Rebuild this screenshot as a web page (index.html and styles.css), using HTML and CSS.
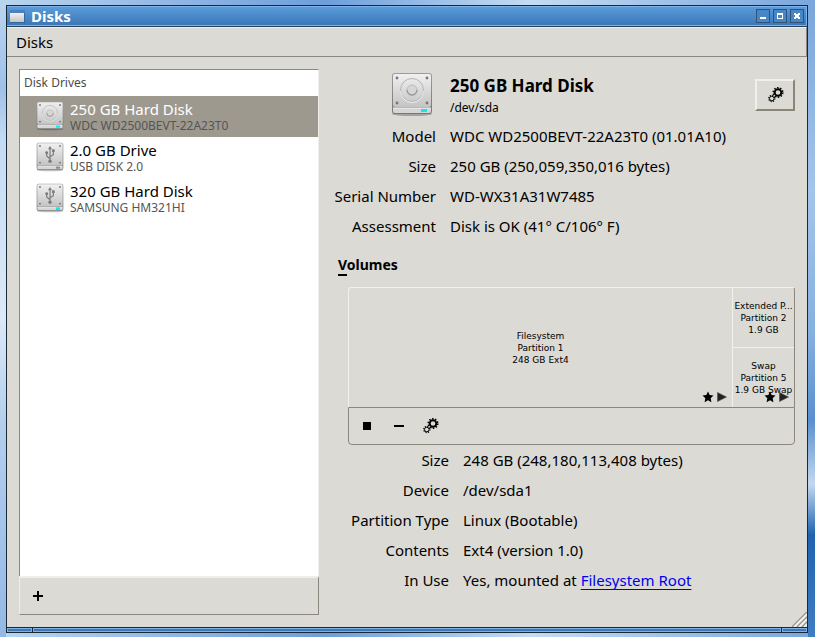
FILE: index.html
```html
<!DOCTYPE html>
<html lang="en">
<head>
<meta charset="utf-8">
<title>Disks</title>
<link rel="stylesheet" href="styles.css">
</head>
<body>
<svg class="defs" aria-hidden="true">
  <defs>
    <linearGradient id="lid" x1="0" y1="0" x2="0" y2="1">
      <stop offset="0" stop-color="#f0f0f0"/><stop offset="1" stop-color="#c4c4c4"/>
    </linearGradient>
    <linearGradient id="edge" x1="0" y1="0" x2="0" y2="1">
      <stop offset="0" stop-color="#9c9c9c"/><stop offset="1" stop-color="#777777"/>
    </linearGradient>
  </defs>
  <symbol id="case" viewBox="0 0 42 45">
    <ellipse cx="21" cy="42" rx="20" ry="2" fill="#000000" opacity=".25"/>
    <rect x="1" y="1" width="40" height="41" rx="3" fill="url(#edge)"/>
    <rect x="2" y="2" width="38" height="33" rx="2" fill="url(#lid)"/>
    <path d="M2 36h38v3q0 2-2 2H4q-2 0-2-2z" fill="#d6d6d6"/>
    <path d="M2 36h38" stroke="#f4f4f4"/>
    <g fill="#777777"><circle cx="6" cy="6" r="1.4"/><circle cx="36" cy="6" r="1.4"/><circle cx="6" cy="31" r="1.4"/><circle cx="36" cy="31" r="1.4"/></g>
  </symbol>
  <symbol id="disk" viewBox="0 0 42 45">
    <use href="#case"/>
    <circle cx="21" cy="18" r="11.5" fill="none" stroke="#b4b4b4"/>
    <path d="M9.5 19a11.5 11.5 0 0 0 23 0" fill="none" stroke="#ececec"/>
    <circle cx="21" cy="18" r="5" fill="#d6d6d6" stroke="#bcbcbc"/>
    <path d="M16 18a5 5 0 0 0 10 0" fill="none" stroke="#989898" stroke-width="1.3"/>
    <rect x="30" y="37" width="6" height="3" fill="#10e8f0"/>
  </symbol>
  <symbol id="usb" viewBox="0 0 42 45">
    <use href="#case"/>
    <g fill="none" stroke="#7c7c7c" stroke-width="1.8"><path d="M21 9v19M21 25l-5-4v-5M21 22l5-3v-5"/></g>
    <g fill="#7c7c7c"><path d="M18 11l3-5 3 5z"/><circle cx="21" cy="29" r="2.6"/><circle cx="16" cy="16" r="2.2"/><path d="M24 11h4v4h-4z"/></g>
    <path d="M30 37h6v3h-6z" fill="#8a8a8a"/>
  </symbol>
  <symbol id="gears" viewBox="0 0 16 16">
    <circle cx="10" cy="5.500" r="3.300" fill="none" stroke="#000000" stroke-width="1.900"/>
    <circle cx="10" cy="5.500" r="4.800" fill="none" stroke="#000000" stroke-width="1.500" stroke-dasharray="1.500 1.516"/>
    <circle cx="3.800" cy="11.500" r="2.300" fill="none" stroke="#000000" stroke-width="1"/>
    <circle cx="3.800" cy="11.500" r="3.100" fill="none" stroke="#000000" stroke-width="1.100" stroke-dasharray="1.200 1.235"/>
  </symbol>
  <symbol id="flags" viewBox="0 0 26 12">
    <path d="M6 .5l1.700 3.600 3.800.5-2.800 2.700.7 3.900L6 9.300l-3.400 1.900.7-3.900L.5 4.600l3.800-.5z" fill="#000000"/>
    <path d="M15.500 1.500l9 4.500-9 4.500z" fill="#222222" stroke="#555555" stroke-width=".7"/>
  </symbol>
</svg>

<div class="window">
  <header class="titlebar">
    <svg class="app-icon" viewBox="0 0 15 13" aria-hidden="true"><path fill="#36669c" d="M0 0h15v13H0z"/><path fill="#4b7fbd" d="M0 0h15v3H0z"/><path fill="url(#lid)" d="M0 3h14v9H0z"/></svg>
    <h1>Disks</h1>
    <button class="win-btn" aria-label="Minimize"><svg viewBox="0 0 12 12"><path d="M3 7h6v2H3z" fill="#ffffff"/></svg></button>
    <button class="win-btn" aria-label="Maximize"><svg viewBox="0 0 12 12"><path d="M3 3h6v6H3zM4 5v3h4V5z" fill="#ffffff" fill-rule="evenodd"/></svg></button>
    <button class="win-btn" aria-label="Close"><svg viewBox="0 0 12 12"><path d="M3 3h2v1h2V3h2v2H8v2h1v2H7V8H5v1H3V7h1V5H3z" fill="#ffffff"/></svg></button>
  </header>
  <nav class="menubar"><button class="menu">Disks</button></nav>

  <main class="content">
    <aside class="sidebar">
      <div class="drives">
        <h2>Disk Drives</h2>
        <ul>
          <li><button class="drive selected"><svg viewBox="0 0 42 45"><use href="#disk"/></svg><span><b>250 GB Hard Disk</b><small>WDC WD2500BEVT-22A23T0</small></span></button></li>
          <li><button class="drive"><svg viewBox="0 0 42 45"><use href="#usb"/></svg><span><b>2.0 GB Drive</b><small>USB DISK 2.0</small></span></button></li>
          <li><button class="drive"><svg viewBox="0 0 42 45"><use href="#usb"/><path d="M30 37h6v3h-6z" fill="#10e8f0"/></svg><span><b>320 GB Hard Disk</b><small>SAMSUNG HM321HI</small></span></button></li>
        </ul>
      </div>
      <div class="drive-tools">
        <button class="tool" aria-label="Add"><svg viewBox="0 0 16 16"><path d="M7 3h2v4h4v2H9v4H7V9H3V7h4z"/></svg></button>
      </div>
    </aside>

    <section class="details">
      <div class="disk-head">
        <svg class="disk-icon" viewBox="0 0 42 45"><use href="#disk"/></svg>
        <div class="disk-name"><h2>250 GB Hard Disk</h2><p>/dev/sda</p></div>
        <button class="actions" aria-label="Drive options"><svg viewBox="0 0 16 16"><use href="#gears"/></svg></button>
      </div>
      <dl class="props">
        <dt>Model</dt><dd>WDC WD2500BEVT-22A23T0 (01.01A10)</dd>
        <dt>Size</dt><dd>250 GB (250,059,350,016 bytes)</dd>
        <dt>Serial Number</dt><dd>WD-WX31A31W7485</dd>
        <dt>Assessment</dt><dd>Disk is OK (41° C/106° F)</dd>
      </dl>
      <h3><span class="mnemonic">V</span>olumes</h3>
      <div class="volumes">
        <div class="map">
          <div class="part main"><span>Filesystem<br>Partition 1<br>248 GB Ext4</span><svg class="flags" viewBox="0 0 26 12"><use href="#flags"/></svg></div>
          <div class="extended">
            <div class="part"><span>Extended P...<br>Partition 2<br>1.9 GB</span></div>
            <div class="part"><span>Swap<br>Partition 5<br>1.9 GB Swap</span><svg class="flags" viewBox="0 0 26 12"><use href="#flags"/></svg></div>
          </div>
        </div>
        <div class="volume-tools">
          <button class="tool" aria-label="Unmount"><svg viewBox="0 0 16 16"><path d="M4 4h8v8H4z"/></svg></button>
          <button class="tool" aria-label="Delete partition"><svg viewBox="0 0 16 16"><path d="M3 7h10v2H3z"/></svg></button>
          <button class="tool" aria-label="Volume options"><svg viewBox="0 0 16 16"><use href="#gears"/></svg></button>
        </div>
      </div>
      <dl class="props volume-props">
        <dt>Size</dt><dd>248 GB (248,180,113,408 bytes)</dd>
        <dt>Device</dt><dd>/dev/sda1</dd>
        <dt>Partition Type</dt><dd>Linux (Bootable)</dd>
        <dt>Contents</dt><dd>Ext4 (version 1.0)</dd>
        <dt>In Use</dt><dd>Yes, mounted at <a href="#root">Filesystem Root</a></dd>
      </dl>
    </section>
    <svg class="grip" viewBox="0 0 15 15" aria-hidden="true"><g fill="none" stroke-width="1.500"><path d="M0 15L15 0M5 15L15 5M10 15l5-5" stroke="#99958a"/><path d="M2 15L15 2M7 15l8-8M12 15l3-3" stroke="#f5f4f1"/></g></svg>
  </main>
  <footer class="frame"><i></i><i></i><i></i></footer>
</div>
</body>
</html>
```
FILE: styles.css
```css
* { box-sizing: border-box; margin: 0; padding: 0; }

body {
  display: flex;
  min-height: 100vh;
  padding: 5px 7px 4px 6px;
  font: 15px/20px "Noto Sans", sans-serif;
  color: #000000;
  background:
    linear-gradient(#7aa6dd, #a3c5ea 30%, #86b0e0 52%, #5a90cf 66%, #c2d8ef 76%, #1f63b0 84%, #3f7dc2) right / 7px 100% no-repeat,
    linear-gradient(#b9d5ee, #a0c0ea 14%, #c4dcf3 22%, #dbe9f8 50%, #b4cfee 66%, #94b8e6) left / 6px 100% no-repeat,
    linear-gradient(90deg, #b9d5ee, #94b8e6 20%, #6d9edb 40%, #c4dcf3 65%, #7aa6dd);
}

button { font: inherit; color: inherit; background: none; border: 0; }
svg { display: block; flex: none; }
.defs { position: absolute; width: 0; height: 0; }

.window {
  flex: 1;
  display: flex;
  flex-direction: column;
  border: 1px solid #1b2733;
  background: #dbdad5;
}

.titlebar {
  display: flex;
  align-items: center;
  gap: 3px;
  height: 20px;
  padding: 0 2px 0 3px;
  border: solid #7fb2e6;
  border-width: 1px 1px 1px 0;
  background: linear-gradient(#5a9bdb, #3c78b6);
  box-shadow: 0 1px #25405c;
}
.app-icon { width: 15px; height: 13px; margin-right: 3px; }
.titlebar h1 { flex: 1; font-size: 15px; line-height: 20px; color: #ffffff; }
.win-btn { width: 14px; height: 14px; border: 1px solid #2f5378; background: #4787c8; }
.win-btn svg { width: 12px; height: 12px; }

.menubar {
  margin-top: 1px;
  padding: 4px 9px;
  height: 30px;
  border: solid #8b877c;
  border-width: 1px 1px 1px 0;
  border-top-color: #f0efec;
}

.content { position: relative; flex: 1; display: flex; gap: 19px; padding: 12px; }

.sidebar { width: 300px; display: flex; flex-direction: column; }
.drives { flex: 1; background: #ffffff; border: 1px solid #8b877c; border-right-color: #efeeeb; border-bottom: 0; }
.drives h2 { padding: 3px 4px; font-size: 12px; font-weight: 400; color: #4c4c4c; }
.drives ul { list-style: none; }
.drive { display: flex; gap: 6px; align-items: flex-start; width: 100%; height: 41px; padding: 5px 16px 0; text-align: left; }
.drive svg { width: 28px; height: 30px; }
.drive b { display: block; font-weight: 400; line-height: 17px; }
.drive small { display: block; font-size: 12px; line-height: 16px; color: #555555; }
.selected { background: #9e998f; }
.selected b { color: #ffffff; }
.drive-tools {
  height: 39px;
  padding: 10px;
  border: 1px solid #8b877c;
  border-top: 2px solid #efeeeb;
  border-left-color: #efeeeb;
}
.tool svg { width: 16px; height: 16px; }

.details { flex: 1; min-width: 0; }
.disk-head { display: flex; gap: 17px; align-items: flex-start; height: 52px; padding: 3px 0 0 53px; }
.disk-icon { width: 42px; height: 45px; }
.disk-name { flex: 1; }
.disk-name h2 { font-size: 17px; line-height: 27px; }
.disk-name p { font-size: 12px; line-height: 18px; }
.actions {
  width: 40px;
  height: 32px;
  margin-top: 7px;
  padding: 6px 11px;
  border: 2px solid #8b8578;
  border-top-color: #f0efec;
  border-left-color: #f0efec;
}
.actions svg { width: 16px; height: 16px; }

.props { display: grid; grid-template-columns: 98px 1fr; column-gap: 14px; line-height: 30px; white-space: nowrap; }
.props dt { justify-self: end; }
.details h3 { margin: 14px 0 12px; font-size: 14px; line-height: 20px; }
.mnemonic { border-bottom: 2px solid #000000; }

.volumes { margin-left: 10px; }
.map {
  display: flex;
  height: 120px;
  border: 1px solid #f2f1ee;
  border-right-color: #8b877c;
  border-bottom: 0;
  border-radius: 3px 3px 0 0;
}
.part {
  position: relative;
  flex: 1;
  display: flex;
  align-items: center;
  justify-content: center;
  font: 9px/12px "DejaVu Sans", sans-serif;
  text-align: center;
  white-space: nowrap;
}
.extended { display: flex; flex-direction: column; width: 62px; border-left: 1px solid #f2f1ee; }
.extended .part + .part { border-top: 1px solid #f2f1ee; }
.flags { position: absolute; right: 4px; bottom: 4px; width: 26px; height: 12px; }
.volume-tools {
  display: flex;
  gap: 16px;
  height: 38px;
  padding: 10px;
  border: 1px solid #8b877c;
  border-radius: 0 0 4px 4px;
}
.volume-props { margin-left: 10px; grid-template-columns: 101px 1fr; }
.volume-props a { color: #0000ee; text-decoration-skip-ink: none; text-underline-offset: 3px; }

.grip { position: absolute; right: 0; bottom: 0; width: 15px; height: 15px; }

.frame { display: flex; height: 5px; gap: 1px; padding-top: 1px; background: #1b2733; }
.frame i { width: 25px; border: 1px solid #7fb2e6; background: #3c78b6; }
.frame i:nth-child(2) { flex: 1; }
```
